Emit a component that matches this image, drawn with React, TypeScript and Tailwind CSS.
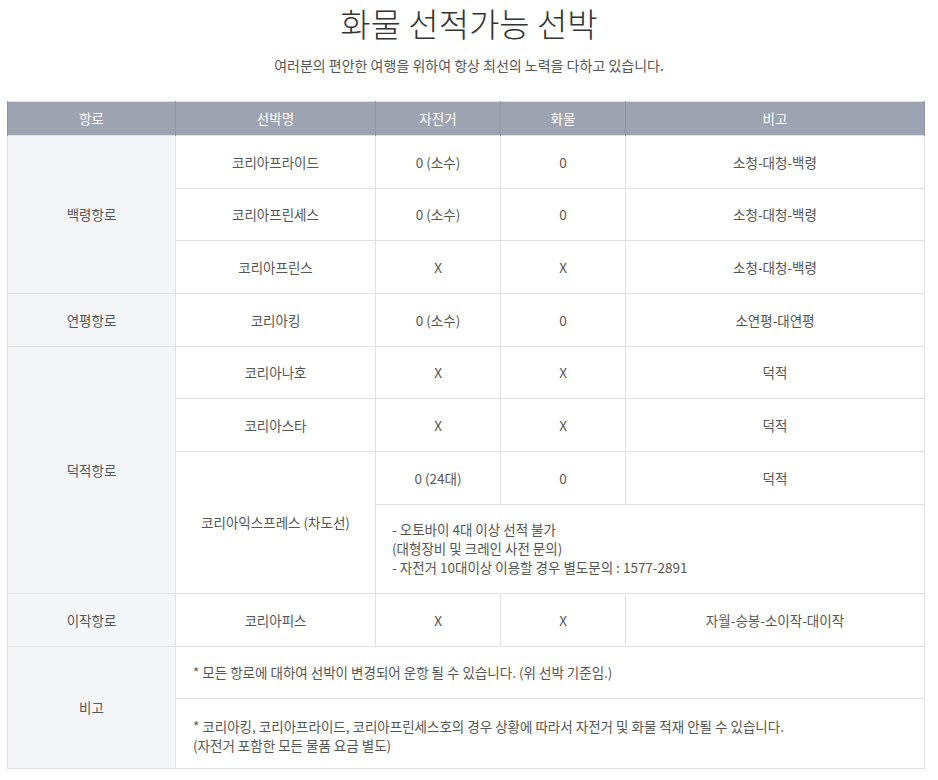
import React from "react";

type Row = {
  route?: { label: string; span: number };
  ship?: { label: string; span: number };
  bike: string;
  cargo: string;
  note: string;
};

const rows: Row[] = [
  { route: { label: "백령항로", span: 3 }, ship: { label: "코리아프라이드", span: 1 }, bike: "0 (소수)", cargo: "0", note: "소청-대청-백령" },
  { ship: { label: "코리아프린세스", span: 1 }, bike: "0 (소수)", cargo: "0", note: "소청-대청-백령" },
  { ship: { label: "코리아프린스", span: 1 }, bike: "X", cargo: "X", note: "소청-대청-백령" },
  { route: { label: "연평항로", span: 1 }, ship: { label: "코리아킹", span: 1 }, bike: "0 (소수)", cargo: "0", note: "소연평-대연평" },
  { route: { label: "덕적항로", span: 4 }, ship: { label: "코리아나호", span: 1 }, bike: "X", cargo: "X", note: "덕적" },
  { ship: { label: "코리아스타", span: 1 }, bike: "X", cargo: "X", note: "덕적" },
  { ship: { label: "코리아익스프레스 (차도선)", span: 2 }, bike: "0 (24대)", cargo: "0", note: "덕적" },
];

const td = "border border-[#e1e1e1] text-center align-middle h-[52.7px]";
const th = "border-x border-[#8f94a6] font-normal text-white text-center h-[34px]";

export default function App() {
  return (
    <div
      className="w-[938px] bg-white pt-[1px] text-[13.5px] text-[#555]"
      style={{ fontFamily: '"Noto Sans CJK KR", "Noto Sans", sans-serif' }}
    >
      {/* Heading */}
      <h1 className="h-[44px] text-center text-[33px] font-light leading-[44px] text-[#333]">
        화물 선적가능 선박
      </h1>
      <p className="mt-[10px] text-center text-[14px] leading-[20px] text-[#555]">
        여러분의 편안한 여행을 위하여 항상 최선의 노력을 다하고 있습니다.
      </p>

      {/* Table */}
      <table className="ml-[7px] mt-[26px] w-[918px] table-fixed border-collapse border border-[#e1e1e1]">
        <colgroup>
          <col className="w-[168px]" />
          <col className="w-[200px]" />
          <col className="w-[125px]" />
          <col className="w-[125px]" />
          <col />
        </colgroup>
        <thead>
          <tr className="bg-[#9ea3b2] border-b border-[#868ba0]">
            <th className={th}>항로</th>
            <th className={th}>선박명</th>
            <th className={th}>자전거</th>
            <th className={th}>화물</th>
            <th className={th}>비고</th>
          </tr>
        </thead>
        <tbody>
          {rows.map((r, i) => (
            <tr key={i}>
              {r.route && (
                <td rowSpan={r.route.span} className={`${td} bg-[#f4f5f9]`}>
                  {r.route.label}
                </td>
              )}
              {r.ship && (
                <td rowSpan={r.ship.span} className={td}>
                  {r.ship.label}
                </td>
              )}
              <td className={td}>{r.bike}</td>
              <td className={td}>{r.cargo}</td>
              <td className={td}>{r.note}</td>
            </tr>
          ))}
          <tr>
            <td colSpan={3} className="h-[89px] border border-[#e1e1e1] pl-[16px] text-left leading-[19px]">
              - 오토바이 4대 이상 선적 불가
              <br />
              (대형장비 및 크레인 사전 문의)
              <br />
              - 자전거 10대이상 이용할 경우 별도문의 : 1577-2891
            </td>
          </tr>
          <tr>
            <td className={`${td} bg-[#f4f5f9]`}>이작항로</td>
            <td className={td}>코리아피스</td>
            <td className={td}>X</td>
            <td className={td}>X</td>
            <td className={td}>자월-승봉-소이작-대이작</td>
          </tr>
          <tr>
            <td rowSpan={2} className={`${td} bg-[#f4f5f9]`}>
              비고
            </td>
            <td colSpan={4} className="h-[52.7px] border border-[#e1e1e1] pl-[17px] text-left">
              * 모든 항로에 대하여 선박이 변경되어 운항 될 수 있습니다. (위 선박 기준임.)
            </td>
          </tr>
          <tr>
            <td colSpan={4} className="h-[70px] border border-[#e1e1e1] pl-[17px] pt-[4px] text-left leading-[19px]">
              * 코리아킹, 코리아프라이드, 코리아프린세스호의 경우 상황에 따라서 자전거 및 화물 적재 안될 수 있습니다.
              <br />
              (자전거 포함한 모든 물품 요금 별도)
            </td>
          </tr>
        </tbody>
      </table>
    </div>
  );
}
